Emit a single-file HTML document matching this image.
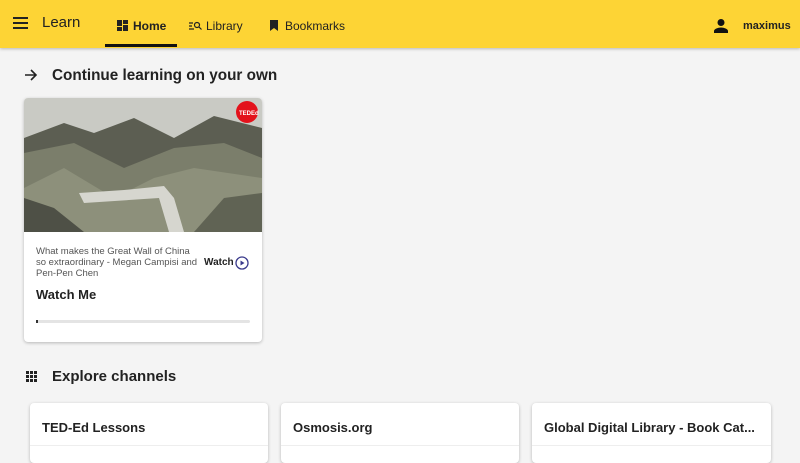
<!DOCTYPE html>
<html><head><style>
*{margin:0;padding:0;box-sizing:border-box}
body{width:800px;height:456px;overflow:hidden;background:#f4f4f4;font-family:"Liberation Sans",sans-serif;color:#222;position:relative}
.hdr{position:absolute;left:0;top:0;width:800px;height:48px;background:#fdd435;box-shadow:0 1px 3px rgba(0,0,0,.25)}
.abs{position:absolute}
.tab{position:absolute;top:19px;font-size:12px;color:#222}
.card{position:absolute;background:#fff;border-radius:4px;box-shadow:0 1px 3px rgba(0,0,0,.25);overflow:hidden}
.ch{top:403px;height:60px;width:238px}
.ch div{position:absolute;left:12px;top:17px;font-size:13px;font-weight:bold;white-space:nowrap}
.ch i{position:absolute;left:0;right:0;top:42px;border-top:1px solid #eee}
</style></head><body>
<div class="hdr">
 <div class="abs" style="left:13px;top:17px;width:15px;height:2px;background:#222;box-shadow:0 5px 0 #222,0 10px 0 #222"></div>
 <div class="abs" style="left:42px;top:14px;font-size:15px">Learn</div>
 <svg class="abs" style="left:117px;top:20px" width="11" height="11" viewBox="0 0 11 11"><rect x="0" y="0" width="5" height="6" fill="#222"/><rect x="6" y="0" width="5" height="4" fill="#222"/><rect x="0" y="7" width="5" height="4" fill="#222"/><rect x="6" y="5" width="5" height="6" fill="#222"/></svg>
 <div class="tab" style="left:133px;font-weight:bold">Home</div>
 <div class="abs" style="left:105px;top:44px;width:72px;height:3px;background:#111"></div>
 <svg class="abs" style="left:189px;top:21px" width="13" height="9" viewBox="0 0 13 9"><path d="M0 2h4M0 5h3M0 8h5" stroke="#222" stroke-width="1.2"/><circle cx="8" cy="4" r="2.5" fill="none" stroke="#222" stroke-width="1.2"/><path d="M10 6l2.5 2.5" stroke="#222" stroke-width="1.2"/></svg>
 <div class="tab" style="left:206px">Library</div>
 <svg class="abs" style="left:270px;top:20px" width="8" height="11" viewBox="0 0 8 11"><path d="M0 0h8v11L4 8 0 11z" fill="#222"/></svg>
 <div class="tab" style="left:285px">Bookmarks</div>
 <svg class="abs" style="left:714px;top:19px" width="14" height="14" viewBox="0 0 14 14"><circle cx="7" cy="3.5" r="3.5" fill="#111"/><path d="M0 14v-2c0-2 4-3.5 7-3.5s7 1.5 7 3.5v2z" fill="#111"/></svg>
 <div class="abs" style="left:743px;top:20px;font-size:11px;font-weight:bold">maximus</div>
</div>
<svg class="abs" style="left:25px;top:69px" width="13" height="12" viewBox="0 0 13 12"><path d="M0 6h11M6 1l5 5-5 5" fill="none" stroke="#222" stroke-width="1.6"/></svg>
<div class="abs" style="left:52px;top:67px;font-size:15.3px;font-weight:bold">Continue learning on your own</div>
<div class="card" style="left:24px;top:98px;width:238px;height:244px">
 <svg width="238" height="134" viewBox="0 0 238 134" style="display:block">
  <rect width="238" height="134" fill="#c9cac4"/>
  <path d="M0 40 L40 25 L70 35 L110 20 L150 40 L190 18 L238 30 V134 H0Z" fill="#5c5e52"/>
  <path d="M0 55 L50 45 L100 70 L150 50 L200 45 L238 60 V134 H0Z" fill="#7b7e6b"/>
  <path d="M0 90 L40 70 L90 100 L130 80 L170 70 L238 80 V134 H0Z" fill="#8d907b"/>
  <path d="M55 95 L100 92 L140 88 L150 100 L160 134 L145 134 L135 100 L60 105Z" fill="#d6d6cf"/>
  <path d="M0 100 L30 110 L60 134 H0Z" fill="#4e5046"/>
  <path d="M170 134 L200 100 L238 95 V134Z" fill="#606354"/>
  <circle cx="223" cy="14" r="11" fill="#e3121b"/>
  <text x="215" y="17" font-size="6" font-weight="bold" fill="#fff" font-family="Liberation Sans">TEDEd</text>
 </svg>
 <div class="abs" style="left:12px;top:148px;width:165px;font-size:9.5px;line-height:11px;color:#555">What makes the Great Wall of China so extraordinary - Megan Campisi and Pen-Pen Chen</div>
 <div class="abs" style="left:180px;top:159px;font-size:10px;font-weight:bold">Watch</div>
 <svg class="abs" style="left:211px;top:158px" width="14" height="14" viewBox="0 0 14 14"><circle cx="7" cy="7" r="6" fill="none" stroke="#3a3a8c" stroke-width="1.3"/><path d="M5.5 4.5v5l4-2.5z" fill="#3a3a8c"/></svg>
 <div class="abs" style="left:12px;top:189px;font-size:13px;font-weight:bold">Watch Me</div>
 <div class="abs" style="left:12px;top:222px;width:214px;height:3px;background:#e4e4e4;border-radius:2px"><div style="width:2px;height:3px;background:#333"></div></div>
</div>
<svg class="abs" style="left:26px;top:371px" width="11" height="11" viewBox="0 0 11 11" fill="#222"><rect x="0" y="0" width="3" height="3"/><rect x="4" y="0" width="3" height="3"/><rect x="8" y="0" width="3" height="3"/><rect x="0" y="4" width="3" height="3"/><rect x="4" y="4" width="3" height="3"/><rect x="8" y="4" width="3" height="3"/><rect x="0" y="8" width="3" height="3"/><rect x="4" y="8" width="3" height="3"/><rect x="8" y="8" width="3" height="3"/></svg>
<div class="abs" style="left:52px;top:368px;font-size:15px;font-weight:bold">Explore channels</div>
<div class="card ch" style="left:30px"><div>TED-Ed Lessons</div><i></i></div>
<div class="card ch" style="left:281px"><div>Osmosis.org</div><i></i></div>
<div class="card ch" style="left:532px;width:239px"><div>Global Digital Library - Book Cat...</div><i></i></div>
</body></html>
